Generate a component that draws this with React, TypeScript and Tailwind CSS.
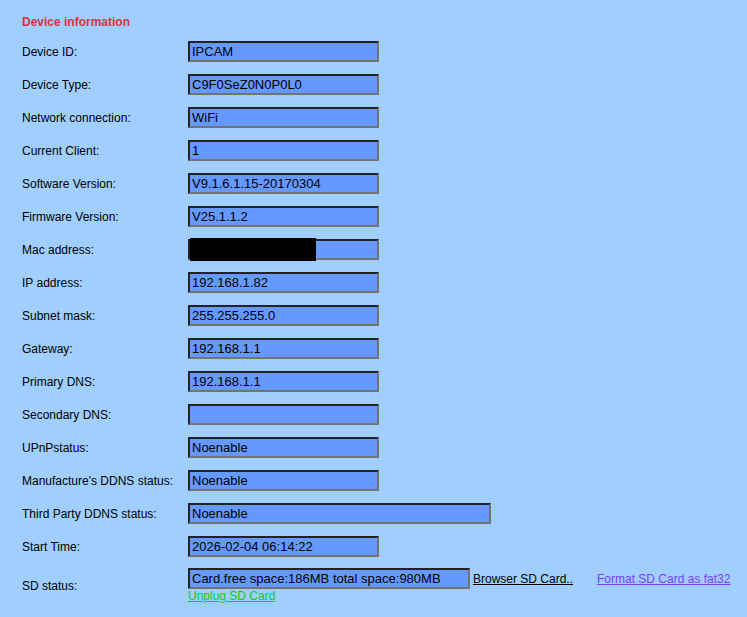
import React from 'react';

type Row = { label: string; value: string; wide?: boolean; hidden?: boolean };

const rows: Row[] = [
  { label: 'Device ID:', value: 'IPCAM' },
  { label: 'Device Type:', value: 'C9F0SeZ0N0P0L0' },
  { label: 'Network connection:', value: 'WiFi' },
  { label: 'Current Client:', value: '1' },
  { label: 'Software Version:', value: 'V9.1.6.1.15-20170304' },
  { label: 'Firmware Version:', value: 'V25.1.1.2' },
  { label: 'Mac address:', value: '', hidden: true },
  { label: 'IP address:', value: '192.168.1.82' },
  { label: 'Subnet mask:', value: '255.255.255.0' },
  { label: 'Gateway:', value: '192.168.1.1' },
  { label: 'Primary DNS:', value: '192.168.1.1' },
  { label: 'Secondary DNS:', value: '' },
  { label: 'UPnPstatus:', value: 'Noenable' },
  { label: "Manufacture's DDNS status:", value: 'Noenable' },
  { label: 'Third Party DDNS status:', value: 'Noenable', wide: true },
  { label: 'Start Time:', value: '2026-02-04 06:14:22' },
];

const Field = ({ value, width, children }: { value: string; width: string; children?: React.ReactNode }) => (
  <div
    className={`relative h-[21px] ${width} border-2 border-t-[#222] border-l-[#222] border-b-[#737373] border-r-[#737373] bg-[#6699ff] px-[2px] text-[13px] leading-[17px] text-black`}
  >
    {value}
    {children}
  </div>
);

export default function App() {
  return (
    <div className="min-h-[617px] w-[747px] bg-[#a0cfff] pl-[22px] pt-[14px] text-[12px] text-black" style={{ fontFamily: '"Liberation Sans", Arial, sans-serif' }}>
      <div className="h-[21px] text-[12px] font-bold leading-[16px] text-[#d8343c]">Device information</div>

      {rows.map((r) => (
        <div key={r.label} className="flex h-[33px] items-center">
          <div className="w-[166px]">{r.label}</div>
          <Field value={r.value} width={r.wide ? 'w-[303px]' : 'w-[191px]'}>
            {r.hidden && <div className="absolute left-0 top-[-3px] h-[23px] w-[126px] bg-black" />}
          </Field>
        </div>
      ))}

      {/* SD card row: field + links, with the unplug link underneath */}
      <div className="flex items-center pt-[5px]">
        <div className="w-[166px]">SD status:</div>
        <div className="flex flex-col">
          <div className="flex items-center">
            <Field value="Card.free space:186MB total space:980MB" width="w-[282px]" />
            <a href="#" className="ml-[3px] text-black underline">Browser SD Card..</a>
            <a href="#" className="ml-[24px] text-[#7b3cff] underline">Format SD Card as fat32</a>
          </div>
          <a href="#" className="text-[#11cc11] underline leading-[14px]">Unplug SD Card</a>
        </div>
      </div>
    </div>
  );
}
